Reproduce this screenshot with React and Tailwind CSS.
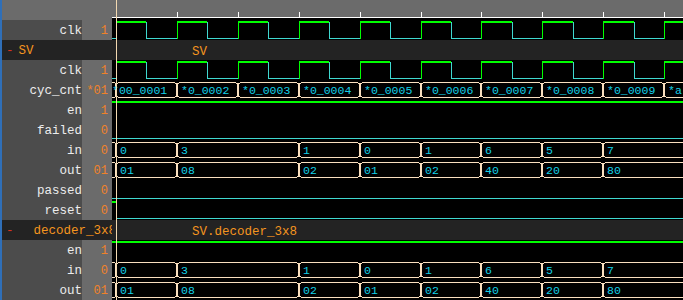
import React from "react";

const X0 = 116;
const P = 60.9;
const W = 571;
const edges = Array.from({ length: 10 }, (_, k) => X0 + P * k);

const GREEN = "#00ff00";
const LOW = "#3fd8d0";
const WHEAT = "#f9dfbf";
const BUSTXT = "#14d2e8";

const Wave = ({ children, dark }) => (
  <svg width={W} height="20" viewBox={`112 0 ${W} 20`} className={`block shrink-0 ${dark ? "bg-[#232323]" : "bg-black"}`} shapeRendering="crispEdges">
    {children}
  </svg>
);

const Clock = () => {
  const parts = [<line key="pre" x1={112} x2={X0} y1={18.5} y2={18.5} stroke={LOW} />];
  edges.forEach((e, k) => {
    const r = Math.round(e);
    const f = Math.round(e + P / 2);
    const n = Math.round(e + P);
    parts.push(
      <g key={k}>
        <line x1={r + 0.5} x2={r + 0.5} y1={18.5} y2={1} stroke={GREEN} />
        <line x1={r} x2={f} y1={2} y2={2} stroke={GREEN} strokeWidth="2" />
        <line x1={f + 0.5} x2={f + 0.5} y1={2} y2={18.5} stroke={LOW} />
        <line x1={f} x2={n} y1={18.5} y2={18.5} stroke={LOW} />
      </g>
    );
  });
  return <>{parts}</>;
};

const High = () => <line x1={112} x2={683} y1={2} y2={2} stroke={GREEN} strokeWidth="2" />;
const Low = () => <line x1={112} x2={683} y1={18.5} y2={18.5} stroke={LOW} />;

const Reset = () => (
  <>
    <line x1={112} x2={X0} y1={2} y2={2} stroke={GREEN} strokeWidth="2" />
    <line x1={X0 + 0.5} x2={X0 + 0.5} y1={2} y2={18.5} stroke={LOW} />
    <line x1={X0} x2={683} y1={18.5} y2={18.5} stroke={LOW} />
  </>
);

const seg = (a, b) =>
  `${a + 0.5},4 ${a + 2.5},2.5 ${b - 2.5},2.5 ${b - 0.5},4 ${b - 0.5},16 ${b - 2.5},17.5 ${a + 2.5},17.5 ${a + 0.5},16`;

// values: [edge index, text, optional text x]
const Bus = ({ values }) => {
  const xs = values.map(([i]) => Math.round(edges[i]));
  return (
    <>
      <polyline points={`112,2.5 ${X0 - 1.5},2.5 ${X0 - 0.5},4 ${X0 - 0.5},16 ${X0 - 1.5},17.5 112,17.5`} fill="none" stroke={WHEAT} />
      {values.map(([i, txt, tx], k) => {
        const a = xs[k];
        const b = k + 1 < xs.length ? xs[k + 1] : 700;
        return (
          <g key={k}>
            <polygon points={seg(a, b)} fill="none" stroke={WHEAT} />
            <text x={tx ?? a + 4} y={14} fill={BUSTXT} fontSize="11.5" shapeRendering="auto">
              {txt}
            </text>
          </g>
        );
      })}
    </>
  );
};

const inVals = [[0, "0"], [1, "3"], [3, "1"], [4, "0"], [5, "1"], [6, "6"], [7, "5"], [8, "7"]];
const outVals = [[0, "01"], [1, "08"], [3, "02"], [4, "01"], [5, "02"], [6, "40"], [7, "20"], [8, "80"]];
const cntVals = [
  [0, "*00_0001", 112],
  [1, "*0_0002"],
  [2, "*0_0003"],
  [3, "*0_0004"],
  [4, "*0_0005"],
  [5, "*0_0006"],
  [6, "*0_0007"],
  [7, "*0_0008"],
  [8, "*0_0009"],
  [9, "*a"],
];

const Row = ({ name, value, children }) => (
  <div className="flex h-5">
    <div className="w-[80px] shrink-0 overflow-hidden whitespace-nowrap bg-[#4c4c4c] text-right text-[12.5px] leading-[23px] text-[#ededed]">
      {name}
    </div>
    <div className="w-[30px] shrink-0 overflow-hidden whitespace-nowrap bg-[#6b6b6b] pr-[4px] text-right text-[12px] leading-[23px] text-[#f0822a]">
      {value}
    </div>
    <Wave>{children}</Wave>
  </div>
);

const Group = ({ name, indent, path }) => (
  <div className="flex h-5 bg-[#232323]">
    <div className="flex w-[110px] shrink-0 overflow-hidden whitespace-nowrap pl-[4px] text-[12.5px] leading-[23px]">
      <span className="text-[#d8331f]">-</span>
      <span className={`text-[#f5951f] ${indent ? "ml-[20px]" : "ml-[5px]"}`}>{name}</span>
    </div>
    <Wave dark>
      <text x={192} y={15} fill="#f5951f" fontSize="12.5" shapeRendering="auto">
        {path}
      </text>
    </Wave>
  </div>
);

const Header = () => (
  <div className="flex h-5">
    <div className="w-[110px] shrink-0 bg-[#6b6b6b]" />
    <Wave>
      <rect x={112} y={0} width={W} height={17} fill="#6b6b6b" />
      <line x1={112} x2={683} y1={17.5} y2={17.5} stroke="#ffffff" />
      {edges.slice(1).map((e, k) => (
        <line key={k} x1={Math.round(e) + 0.5} x2={Math.round(e) + 0.5} y1={12} y2={17} stroke="#ffffff" />
      ))}
    </Wave>
  </div>
);

export default function App() {
  return (
    <div className="relative flex h-[300px] w-[683px] overflow-hidden bg-black font-['Liberation_Mono',monospace]">
      <div className="w-[2px] shrink-0 bg-[#2f6fb8]" />
      <div className="flex flex-col">
        <Header />
        <Row name="clk" value="1"><Clock /></Row>
        <Group name="SV" path="SV" />
        <Row name="clk" value="1"><Clock /></Row>
        <Row name="cyc_cnt" value="*01"><Bus values={cntVals} /></Row>
        <Row name="en" value="1"><High /></Row>
        <Row name="failed" value="0"><Low /></Row>
        <Row name="in" value="0"><Bus values={inVals} /></Row>
        <Row name="out" value="01"><Bus values={outVals} /></Row>
        <Row name="passed" value="0"><Low /></Row>
        <Row name="reset" value="0"><Reset /></Row>
        <Group name="decoder_3x8" indent path="SV.decoder_3x8" />
        <Row name="en" value="1"><High /></Row>
        <Row name="in" value="0"><Bus values={inVals} /></Row>
        <Row name="out" value="01"><Bus values={outVals} /></Row>
      </div>
      <div className="absolute left-[116px] top-0 h-[300px] w-px bg-[#f3d9b1]" />
    </div>
  );
}
